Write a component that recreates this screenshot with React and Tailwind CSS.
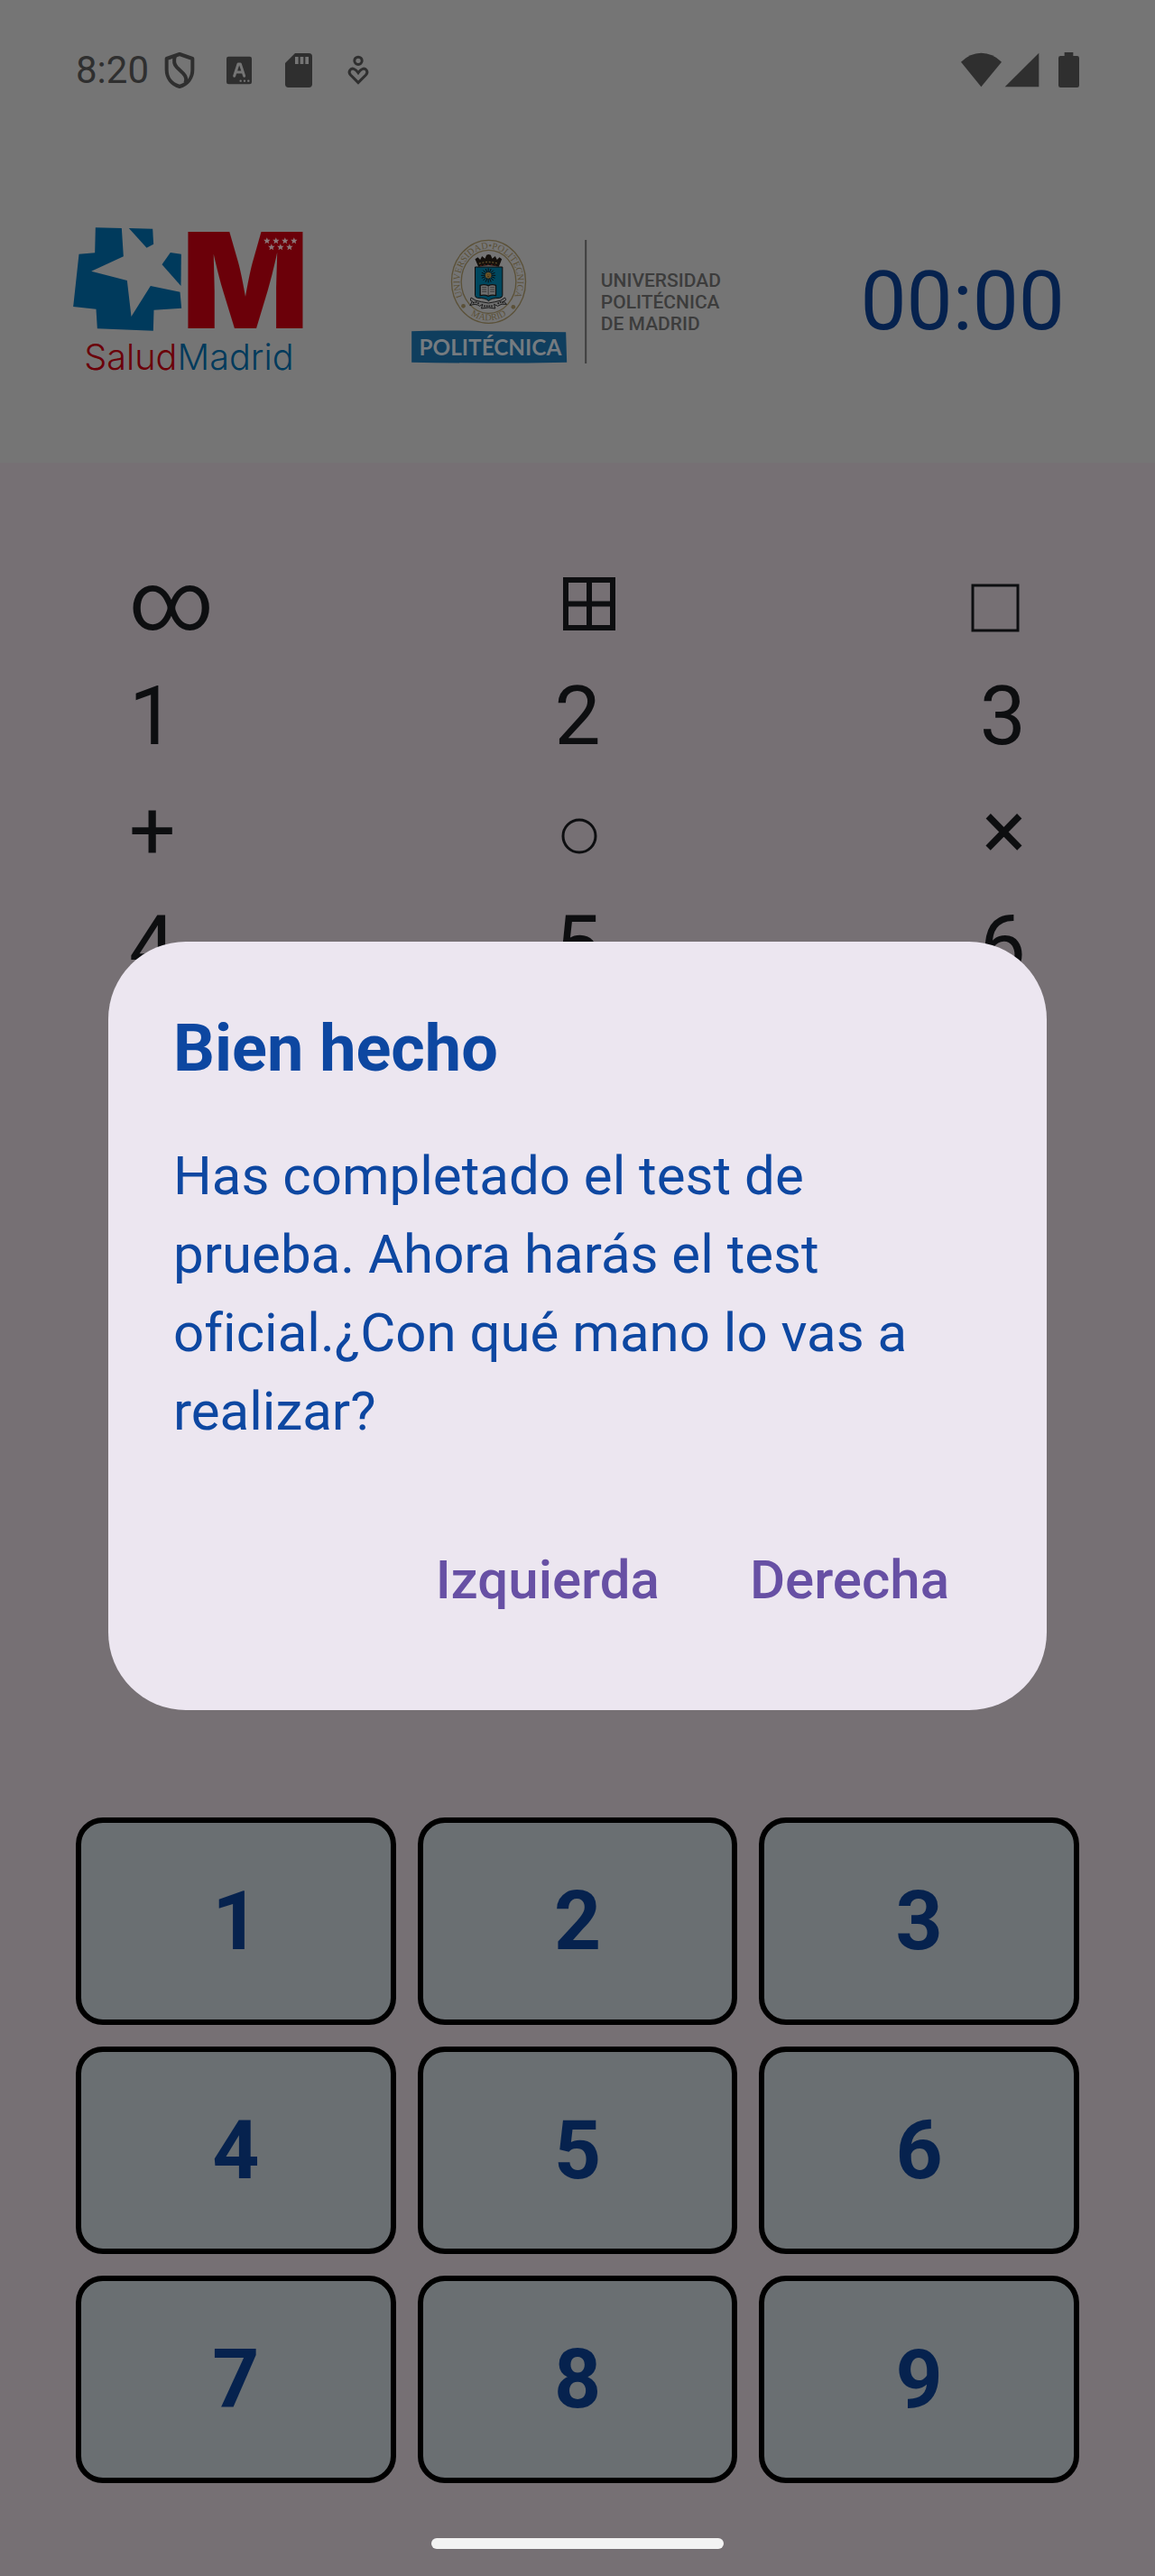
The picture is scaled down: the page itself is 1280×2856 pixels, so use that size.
import React from "react";

const KEYS = ["1", "2", "3", "4", "5", "6", "7", "8", "9"];

const STARS = [
  [677, 81], [707, 81], [737, 81], [767, 81],
  [692, 102], [722, 102], [752, 102],
];

function ShieldIcon() {
  return (
    <svg viewBox="357 54 120 120" className="size-10" fill="none" stroke="currentColor" strokeWidth="12" strokeLinejoin="round" aria-hidden="true">
      <path d="M417 60 L460 75 V112 C460 140 443 160 417 168 C391 160 374 140 374 112 V75 Z" />
      <path d="M402 66 C397 82 397 93 408 104 L429 124 C440 135 440 147 436 156" />
    </svg>
  );
}

function LetterIcon() {
  return (
    <svg viewBox="555 54 120 120" className="size-10" aria-hidden="true">
      <rect x="573" y="68" width="84" height="92" rx="7" fill="currentColor" />
      <path d="M599 133 L612 93 H619 L632 133 M605 120 H626" fill="none" stroke="#757575" strokeWidth="9" strokeLinecap="round" strokeLinejoin="round" />
      <circle cx="620" cy="149" r="3.5" fill="#757575" />
      <circle cx="633" cy="149" r="3.5" fill="#757575" />
      <circle cx="646" cy="149" r="3.5" fill="#757575" />
    </svg>
  );
}

function SdCardIcon() {
  return (
    <svg viewBox="753 54 120 120" className="size-10" aria-hidden="true">
      <path d="M801 57 H847 Q858 57 858 68 V160 Q858 171 847 171 H779 Q768 171 768 160 V90 Z" fill="currentColor" />
      <path d="M801 69 H812 V93 H801 Z M818 69 H829 V93 H818 Z M835 69 H846 V93 H835 Z" fill="#757575" />
    </svg>
  );
}

function HeartPersonIcon() {
  return (
    <svg viewBox="951 54 120 120" className="size-10" fill="none" stroke="currentColor" strokeWidth="9" aria-hidden="true">
      <circle cx="1011" cy="82" r="12.5" />
      <path d="M1011 155 L986 130 C975 118 986 106 996 109 C1003 111 1007 116 1011 122 C1015 116 1019 111 1026 109 C1036 106 1047 118 1036 130 Z" strokeLinejoin="miter" />
    </svg>
  );
}

function StatusBar() {
  return (
    <div className="flex h-[156px] items-center justify-between bg-[#757575] px-[84px] text-[#2f2f2f]">
      <div className="flex items-center gap-[26px]">
        <div className="flex items-center gap-[14px]">
          <span className="text-[42px] leading-none">8:20</span>
          <ShieldIcon />
        </div>
        <LetterIcon />
        <SdCardIcon />
        <HeartPersonIcon />
      </div>
      <svg viewBox="75 54 393 120" className="h-10 w-[131px]" fill="currentColor" aria-hidden="true">
        <path d="M75 86 Q105 56 142 56 Q180 56 210 86 L142 169 Z" />
        <path d="M334 56 V169 H221 Z" />
        <path d="M419 54 H448 V66 H461 Q468 66 468 73 V164 Q468 171 461 171 H406 Q399 171 399 164 V73 Q399 66 406 66 H419 Z" />
      </svg>
    </div>
  );
}

function SaludMadridLogo() {
  return (
    <svg viewBox="30 30 770 510" className="h-[170px] w-[257px] shrink-0 overflow-visible" role="img" aria-label="SaludMadrid">
      <g fill="#003a5c">
        <path d="M107 37 L194 39 L200 133 L93 182 L212 213 L226 333 L290 231 L388 251 L393 305 L301 311 L299 380 L113 373 L109 308 L33 300 L52 125 L105 121 Z" />
        <path d="M218 39 L297 41 L300 92 L277 104 Z" />
        <path d="M356 120 L392 125 L391 231 L328 160 Z" />
      </g>
      <text x="605" y="372" textAnchor="middle" fontFamily="Inter, sans-serif" fontWeight="900" fontSize="442" fill="#6b0009">M</text>
      <g fill="#8a7577">
        {STARS.map(([x, y]) => (
          <path key={`${x}-${y}`} transform={`translate(${x} ${y})`} d="M0 -11 L3 -4 L11 -4 L5 2 L7 10 L0 5 L-7 10 L-5 2 L-11 -4 L-3 -4 Z" />
        ))}
      </g>
      <text x="69" y="509" fontFamily="Inter, sans-serif" fontWeight="300" fontSize="119">
        <tspan fill="#6b0009">Salud</tspan>
        <tspan fill="#003a5c">Madrid</tspan>
      </text>
    </svg>
  );
}

function PolitecnicaLogo() {
  return (
    <svg viewBox="45 45 1040 420" className="h-[140px] w-[347px] shrink-0" role="img" aria-label="Universidad Politécnica de Madrid">
      <defs>
        <path id="crest-top" d="M222 244 A96 110 0 1 1 386 244" />
        <path id="crest-bottom" d="M230 286 A116 129 0 0 0 378 286" />
      </defs>
      <g fill="none" stroke="#5b5138">
        <ellipse cx="304" cy="187" rx="123" ry="138" strokeWidth="4" />
        <ellipse cx="304" cy="187" rx="91" ry="105" strokeWidth="4" />
      </g>
      <g fill="#5b5138" fontFamily="'Liberation Serif', serif" fontSize="31">
        <text textAnchor="middle"><textPath href="#crest-top" startOffset="50%">UNIVERSIDAD•POLITECNICA</textPath></text>
        <text textAnchor="middle"><textPath href="#crest-bottom" startOffset="50%">MADRID</textPath></text>
        <circle cx="220" cy="268" r="7" />
        <circle cx="386" cy="271" r="7" />
      </g>
      <path d="M259 138 H350 V232 Q350 240 340 241 Q312 241 304 251 Q296 241 268 241 Q259 240 259 232 Z" fill="#00475e" stroke="#0b0b0b" strokeWidth="3" />
      <path d="M270 137 L259 112 L268 106 L276 114 L282 102 L292 110 L297 98 L304 96 L311 98 L316 110 L326 102 L332 114 L340 106 L348 112 L338 137 Q304 128 270 137 Z" fill="#14100c" />
      <path d="M272 127 Q304 116 336 127" fill="none" stroke="#5b4a28" strokeWidth="4" strokeDasharray="6 5" />
      <path d="M276 134 Q304 126 332 134" fill="none" stroke="#5a1a18" strokeWidth="3" strokeDasharray="5 7" />
      <g stroke="#0a0d10" strokeWidth="3">
        <path d="M303 142 V190 M279 166 H327 M286 149 L320 183 M320 149 L286 183 M294 144 L312 188 M312 144 L294 188 M281 157 L325 175 M325 157 L281 175" />
      </g>
      <circle cx="303" cy="166" r="10" fill="#6a5428" />
      <path d="M299 164 H301 M305 164 H307 M300 170 H306" stroke="#1c150a" strokeWidth="2" />
      <path d="M276 199 Q290 194 303 200 Q316 194 328 199 V233 Q316 229 303 235 Q290 229 276 233 Z" fill="#6f6f6f" stroke="#111" strokeWidth="4" />
      <path d="M303 200 V233 M282 206 H297 M282 213 H297 M282 220 H297 M309 206 H323 M309 213 H323 M309 220 H323" stroke="#1e1e1e" strokeWidth="2" />
      <path d="M246 240 Q240 252 250 252 L242 266 Q262 258 274 268 L284 262 L280 276 Q304 270 326 276 L322 262 L334 268 Q346 258 364 262 L354 252 Q366 250 358 240 Q346 252 326 254 Q304 262 280 254 Q258 252 246 240 Z" fill="#6e6e6e" stroke="#1a1a1a" strokeWidth="3" />
      <path d="M252 258 Q262 252 272 260 M288 268 H320 M334 260 Q344 252 356 256" fill="none" stroke="#1a1a1a" strokeWidth="5" strokeDasharray="5 3" />
      <path d="M48 352 Q150 347 300 352 L561 355 L564 455 Q300 460 48 455 Z" fill="#0f3e5e" />
      <text x="73" y="432" fontFamily="Lato, sans-serif" fontWeight="700" fontSize="73" fill="#757b80">POLITÉCNICA</text>
      <rect x="624" y="48" width="6" height="411" fill="#3f3f3f" />
      <g fontFamily="Roboto, sans-serif" fontWeight="500" fontSize="63" fill="#3c3c3c">
        <text x="677" y="205">UNIVERSIDAD</text>
        <text x="677" y="277">POLITÉCNICA</text>
        <text x="677" y="348">DE MADRID</text>
      </g>
    </svg>
  );
}

function Header() {
  return (
    <header className="flex h-[357px] items-center bg-[#757575] pr-[100px] pl-20">
      <SaludMadridLogo />
      <div className="ml-[118px]">
        <PolitecnicaLogo />
      </div>
      <time className="ml-auto text-[91px] leading-[107px] text-[#06224e]">00:00</time>
    </header>
  );
}

function SymbolTable() {
  return (
    <section className="px-[143px] pt-[81px] text-[91px] leading-[107px] text-[#0d0e10]">
      <div className="flex h-[147px] items-end justify-between pb-5">
        <span>∞</span>
        <svg viewBox="0 0 66 107" className="h-[107px] w-[66px]" fill="none" stroke="currentColor" strokeWidth="6" role="img" aria-label="⊞">
          <path d="M6 29 H58 V82 H6 Z M32 29 V82 M6 55.5 H58" />
        </svg>
        <svg viewBox="0 0 66 107" className="h-[107px] w-[66px]" fill="none" stroke="currentColor" strokeWidth="3" role="img" aria-label="□">
          <path d="M7 35 H57 V85 H7 Z" />
        </svg>
      </div>
      <div className="flex justify-between">
        <span>1</span>
        <span>2</span>
        <span>3</span>
      </div>
      <div className="flex h-[147px] items-end justify-between pb-5">
        <span>+</span>
        <svg viewBox="0 0 50 107" className="h-[107px] w-[50px]" fill="none" stroke="currentColor" strokeWidth="3" role="img" aria-label="○">
          <circle cx="25" cy="59" r="18" />
        </svg>
        <span>×</span>
      </div>
      <div className="flex justify-between">
        <span>4</span>
        <span>5</span>
        <span>6</span>
      </div>
    </section>
  );
}

function Keypad() {
  return (
    <section className="mt-auto grid grid-cols-3 gap-6 px-[84px]">
      {KEYS.map((key) => (
        <button
          key={key}
          type="button"
          className="h-[230px] rounded-[30px] border-6 border-black bg-[#6a6f72] text-[91px] leading-[107px] font-bold text-[#06224e]"
        >
          {key}
        </button>
      ))}
    </section>
  );
}

function HandDialog() {
  return (
    <div className="absolute inset-0 flex items-center justify-center px-[120px] pt-[84px]">
      <div role="dialog" aria-modal="true" aria-labelledby="dialog-title" className="w-full rounded-[86px] bg-[#ece6f0] p-[72px]">
        <h2 id="dialog-title" className="text-[72px] leading-[94px] font-bold text-[#0d47a1]">Bien hecho</h2>
        <p className="mt-[50px] text-[60px] leading-[87px] text-[#0d47a1] [font-variant-ligatures:none]">
          Has completado el test de prueba. Ahora harás el test oficial.¿Con qué mano lo vas a realizar?
        </p>
        <div className="mt-[72px] flex justify-end gap-7 text-[60px] font-medium text-[#6750a4]">
          <button type="button" className="h-36 px-9">Izquierda</button>
          <button type="button" className="h-36 px-9">Derecha</button>
        </div>
      </div>
    </div>
  );
}

export default function App() {
  return (
    <div className="relative flex min-h-screen flex-col bg-[#767074] font-[Roboto,sans-serif]">
      <StatusBar />
      <Header />
      <SymbolTable />
      <Keypad />
      <div className="flex h-[103px] items-end justify-center pb-[30px]">
        <div className="h-3 w-[324px] rounded-full bg-[#f3f3f3]" />
      </div>
      <HandDialog />
    </div>
  );
}
